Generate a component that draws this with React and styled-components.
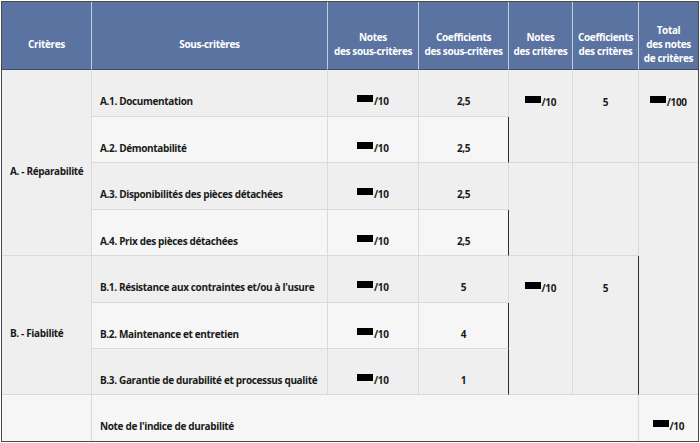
import React from "react";
import styled, { createGlobalStyle } from "styled-components";

const GlobalStyle = createGlobalStyle`
  html, body { margin: 0; padding: 0; background: #ffffff; }
  body { font-family: "Open Sans", "Noto Sans", sans-serif; }
`;

const LIGHT = "#dadada";
const DARK = "#2e2e2e";
const ROW_DARK = "#efefef";
const ROW_LIGHT = "#f6f6f6";

const Page = styled.div`
  padding: 1px 0 0 1px;
`;

const Table = styled.div`
  box-sizing: border-box;
  width: 698px;
  display: grid;
  grid-template-columns: 90px 236px 91px 90px 64px 66px 59px;
  grid-template-rows: 68px 47px 46px 47px 46px 47px 46px 46px 46px;
  border: 1px solid #4a4a4a;
  font-family: "Open Sans", "Noto Sans", sans-serif;
  font-size: 10px;
  letter-spacing: -0.35px;
`;

const HeadCell = styled.div`
  box-sizing: border-box;
  background: #5b73a1;
  color: #ffffff;
  font-weight: 700;
  line-height: 14px;
  text-align: center;
  white-space: nowrap;
  display: flex;
  align-items: center;
  justify-content: center;
  padding-top: 16px;
  border-right: ${(p) => (p.$last ? "none" : "1px solid #c3cbdb")};
  border-bottom: 1px solid #3f4c66;
`;

const Cell = styled.div`
  box-sizing: border-box;
  background: ${(p) => p.$bg || ROW_DARK};
  color: #1a1a1a;
  font-weight: 700;
  white-space: nowrap;
  display: flex;
  align-items: center;
  justify-content: ${(p) => (p.$left ? "flex-start" : "center")};
  padding: 16px ${(p) => (p.$left ? "8px" : "0")} 0;
  border-right: ${(p) => (p.$r ? `1px solid ${p.$r}` : "none")};
  border-bottom: ${(p) => (p.$b ? `1px solid ${p.$b}` : "none")};
  grid-row: ${(p) => p.$rows || "auto"};
  grid-column: ${(p) => p.$cols || "auto"};
`;

const Mask = styled.span`
  display: inline-block;
  width: 16px;
  height: 7px;
  margin-right: 0.5px;
  background: #000;
  vertical-align: 3px;
`;

const Score = ({ max }) => (
  <span>
    <Mask />/{max}
  </span>
);

const headers = [
  ["Critères"],
  ["Sous-critères"],
  ["Notes", "des sous-critères"],
  ["Coefficients", "des sous-critères"],
  ["Notes", "des critères"],
  ["Coefficients", "des critères"],
  ["Total", "des notes", "de critères"],
];

export default function App() {
  return (
    <Page>
      <GlobalStyle />
      <Table>
        {headers.map((lines, i) => (
          <HeadCell key={i} $last={i === headers.length - 1}>
            <div>
              {lines.map((l, j) => (
                <div key={j}>{l}</div>
              ))}
            </div>
          </HeadCell>
        ))}

        {/* Row 1 */}
        <Cell $left $rows="2 / span 4" $cols="1" $r={LIGHT} $b={LIGHT}>A. - Réparabilité</Cell>
        <Cell $left $r={LIGHT} $b={LIGHT}>A.1. Documentation</Cell>
        <Cell $r={LIGHT} $b={LIGHT}><Score max={10} /></Cell>
        <Cell $r={LIGHT} $b={LIGHT}>2,5</Cell>
        <Cell $r={LIGHT}><Score max={10} /></Cell>
        <Cell $r={LIGHT}>5</Cell>
        <Cell><Score max={100} /></Cell>

        {/* Row 2 */}
        <Cell $left $bg={ROW_LIGHT} $r={LIGHT} $b={LIGHT}>A.2. Démontabilité</Cell>
        <Cell $bg={ROW_LIGHT} $r={LIGHT} $b={LIGHT}><Score max={10} /></Cell>
        <Cell $bg={ROW_LIGHT} $r={DARK} $b={LIGHT}>2,5</Cell>
        <Cell $r={LIGHT} $b={LIGHT} />
        <Cell $r={LIGHT} $b={LIGHT} />
        <Cell $b={LIGHT} />

        {/* Row 3 */}
        <Cell $left $r={LIGHT} $b={LIGHT}>A.3. Disponibilités des pièces détachées</Cell>
        <Cell $r={LIGHT} $b={LIGHT}><Score max={10} /></Cell>
        <Cell $r={LIGHT} $b={LIGHT}>2,5</Cell>
        <Cell $r={LIGHT} />
        <Cell $r={LIGHT} />
        <Cell />

        {/* Row 4 */}
        <Cell $left $bg={ROW_LIGHT} $r={LIGHT} $b={LIGHT}>A.4. Prix des pièces détachées</Cell>
        <Cell $bg={ROW_LIGHT} $r={LIGHT} $b={LIGHT}><Score max={10} /></Cell>
        <Cell $bg={ROW_LIGHT} $r={DARK} $b={LIGHT}>2,5</Cell>
        <Cell $r={LIGHT} $b={LIGHT} />
        <Cell $r={LIGHT} $b={LIGHT} />
        <Cell />

        {/* Row 5 */}
        <Cell $left $rows="6 / span 3" $cols="1" $r={LIGHT} $b={LIGHT}>B. - Fiabilité</Cell>
        <Cell $left $r={LIGHT} $b={LIGHT}>B.1. Résistance aux contraintes et/ou à l'usure</Cell>
        <Cell $r={LIGHT} $b={LIGHT}><Score max={10} /></Cell>
        <Cell $r={LIGHT} $b={LIGHT}>5</Cell>
        <Cell $r={LIGHT}><Score max={10} /></Cell>
        <Cell $r={DARK}>5</Cell>
        <Cell />

        {/* Row 6 */}
        <Cell $left $bg={ROW_LIGHT} $r={LIGHT} $b={LIGHT}>B.2. Maintenance et entretien</Cell>
        <Cell $bg={ROW_LIGHT} $r={LIGHT} $b={LIGHT}><Score max={10} /></Cell>
        <Cell $bg={ROW_LIGHT} $r={DARK} $b={LIGHT}>4</Cell>
        <Cell $r={LIGHT} />
        <Cell $r={DARK} />
        <Cell />

        {/* Row 7 */}
        <Cell $left $r={LIGHT} $b={LIGHT}>B.3. Garantie de durabilité et processus qualité</Cell>
        <Cell $r={LIGHT} $b={LIGHT}><Score max={10} /></Cell>
        <Cell $r={DARK} $b={LIGHT}>1</Cell>
        <Cell $r={LIGHT} $b={LIGHT} />
        <Cell $r={DARK} $b={LIGHT} />
        <Cell $b={LIGHT} />

        {/* Row 8 */}
        <Cell $bg={ROW_LIGHT} $r={LIGHT} />
        <Cell $left $cols="2 / span 5" $bg={ROW_LIGHT} $r={LIGHT}>Note de l'indice de durabilité</Cell>
        <Cell $bg={ROW_LIGHT}><Score max={10} /></Cell>
      </Table>
    </Page>
  );
}
